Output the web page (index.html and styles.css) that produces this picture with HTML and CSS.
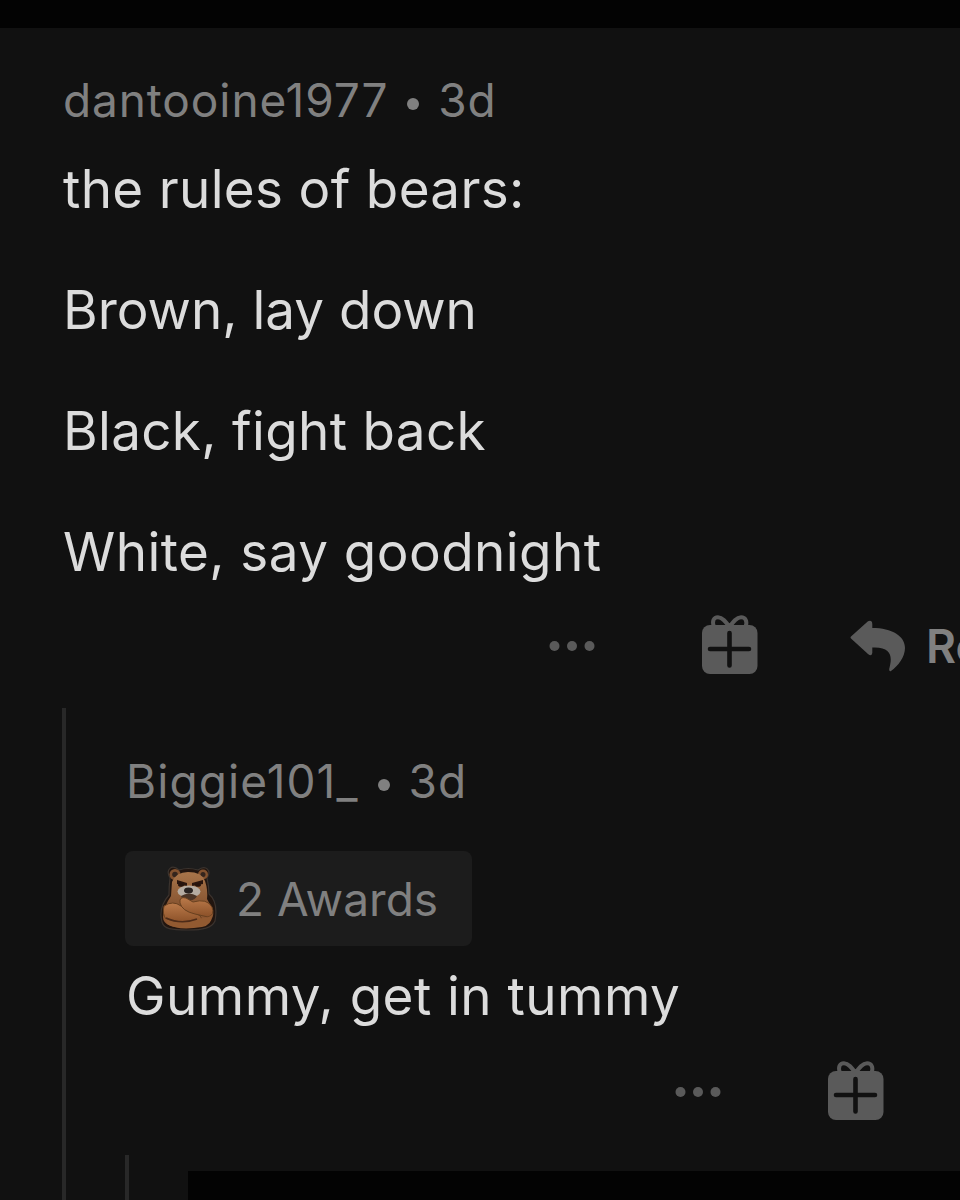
FILE: index.html
```
<!DOCTYPE html>
<html lang="en">

<head>
    <meta charset="UTF-8">
    <meta name="viewport" content="width=device-width, initial-scale=1.0">
    <title>Comments</title>
    <link rel="stylesheet" href="styles.css">
</head>

<body>
    <!-- Shared icons -->
    <svg class="icon-defs" width="0" height="0">
        <symbol id="icon-more" viewBox="0 0 46 12">
            <circle cx="5.5" cy="6" r="5" />
            <circle cx="23" cy="6" r="5" />
            <circle cx="40.5" cy="6" r="5" />
        </symbol>
        <symbol id="icon-gift" viewBox="0 0 56 60">
            <path d="M27.5 12 C24 7 20.5 2.2 16 2.2 C11.5 2.2 10 6 11.8 11.5 M27.5 12 C31 7 34.5 2.2 39 2.2 C43.5 2.2 45.5 6 43.7 11.5" fill="none" stroke="currentColor" stroke-width="4" />
            <rect x="0" y="10" width="55.5" height="49" rx="8" />
            <path d="M27.5 18 V50.5 M8 34 H47" fill="none" stroke="#111" stroke-width="4.6" stroke-linecap="round" />
        </symbol>
        <symbol id="icon-reply" viewBox="0 0 56 52">
            <path d="M1 16.5 L18 1.200 Q22 -0.500 22.300 4 V8 C42 8 55 16 55 28 C55 37 48 46 41 51 Q39 52 39.200 49 C42.500 37 42 26.500 22.300 27.500 V33 Q21.500 37 18 34 L1 18.500 Q0 17.500 1 16.500 Z" />
        </symbol>
    </svg>

    <div class="top-bar"></div>

    <div class="comment">
        <div class="author">dantooine1977 <span class="dot"></span> 3d</div>
        <div class="comment-text">
            <p class="line-rules">the rules of bears:</p>
            <p class="line-brown">Brown, lay down</p>
            <p class="line-black">Black, fight back</p>
            <p class="line-white">White, say goodnight</p>
        </div>
        <div class="actions">
            <svg class="more"><use href="#icon-more" /></svg>
            <svg class="gift"><use href="#icon-gift" /></svg>
            <svg class="reply"><use href="#icon-reply" /></svg>
            <span class="reply-label">Reply</span>
        </div>
    </div>

    <div class="replies">
        <div class="author">Biggie101_ <span class="dot"></span> 3d</div>
        <div class="awards">
            <svg class="bear" viewBox="0 0 60 68">
                <defs>
                    <linearGradient id="fur" x1="0" y1="0" x2="0" y2="1">
                        <stop offset="0" stop-color="#a8754a" />
                        <stop offset="0.55" stop-color="#8a5733" />
                        <stop offset="1" stop-color="#8f5630" />
                    </linearGradient>
                    <linearGradient id="arm" x1="0" y1="0" x2="0" y2="1">
                        <stop offset="0" stop-color="#bb7a4a" />
                        <stop offset="1" stop-color="#8a5028" />
                    </linearGradient>
                </defs>
                <path d="M12 14 C7 5 14 0 21 6 Q30 3 40 6 C48 0 54 7 49 14 Q51 23 51 30 C58 36 59 46 57 57 C54 64 45 66 30 66 C13 66 6 65 4 58 C1 47 4 39 11 31 Q11 22 12 14 Z" fill="#21150f" stroke="#3b332e" stroke-width="1.2" />
                <circle cx="17" cy="10.5" r="5.5" fill="#82522f" />
                <circle cx="17" cy="10.5" r="2.8" fill="#34251d" />
                <circle cx="45" cy="10.5" r="5" fill="#82522f" />
                <circle cx="45" cy="10.5" r="2.5" fill="#34251d" />
                <path d="M14 18 Q18 8 30 8 Q44 8 47 17 Q50 26 49 35 L55 46 Q58 62 30 64 Q5 64 5 53 Q6 42 13 32 Z" fill="url(#fur)" />
                <path d="M19 16 L29 19 V22 L19 20 Z M45 16 L34 19 V22 L45 20 Z" fill="#2a160e" />
                <ellipse cx="23" cy="21" rx="3" ry="1.8" fill="#26140d" />
                <ellipse cx="40" cy="21" rx="3" ry="1.8" fill="#26140d" />
                <ellipse cx="31" cy="27.5" rx="11.5" ry="6" fill="#b5aca2" />
                <path d="M23 32 Q31 27 39 32 Q37 37 30 36 Q24 36 23 32 Z" fill="#4b3527" />
                <ellipse cx="30.5" cy="26.500" rx="4.500" ry="3" fill="#292321" />
                <path d="M6 42 Q15 36 23 42 L41 51 Q46 55 41 59 Q21 59 8 55 Q4 50 6 42 Z" fill="url(#arm)" stroke="#68401f" stroke-width="1" />
                <path d="M22 39 Q21 32 28 34 L35 38 Q49 34 54 43 Q57 51 50 53 L37 50 Q24 47 22 39 Z" fill="url(#arm)" stroke="#68401f" stroke-width="1" />
                <path d="M8 55 Q24 61 39 54 Q49 55 54 51 Q54 61 44 63 Q20 67 9 60 Z" fill="#925a31" />
                <path d="M8 54 Q23 61 39 55" fill="none" stroke="#4d2b18" stroke-width="1.5" />
            </svg>
            <span>2 Awards</span>
        </div>
        <div class="comment-text">
            <p class="line-gummy">Gummy, get in tummy</p>
        </div>
        <div class="actions">
            <svg class="more"><use href="#icon-more" /></svg>
            <svg class="gift"><use href="#icon-gift" /></svg>
        </div>
        <div class="nested">
            <div class="hidden-reply"></div>
        </div>
    </div>
</body>

</html>
```
FILE: styles.css
```
* {
    box-sizing: border-box;
}

body {
    margin: 0;
    height: 1200px;
    display: flex;
    flex-direction: column;
    overflow: hidden;
    background: #111;
    color: #dcdcdc;
    font-family: Inter, "Liberation Sans", sans-serif;
}

.icon-defs {
    position: absolute;
}

.top-bar {
    height: 28px;
    flex: none;
    background: #030303;
}

.comment {
    height: 680px;
    flex: none;
    padding: 44px 0 0 63px;
    overflow: hidden;
}

.author {
    height: 56px;
    color: #808080;
    font-size: 46px;
    line-height: 56px;
    letter-spacing: 0.9px;
    white-space: nowrap;
}

.replies .author {
    letter-spacing: 1.1px;
}

.dot {
    display: inline-block;
    width: 12px;
    height: 12px;
    margin: 0 5px;
    border-radius: 50%;
    background: #808080;
    vertical-align: 7px;
}

.comment-text {
    margin-top: 31px;
    font-size: 53px;
    line-height: 60px;
    white-space: nowrap;
}

.comment-text p {
    margin: 0 0 61px;
}

.comment-text p:last-child {
    margin-bottom: 0;
}

.line-rules,
.line-black {
    letter-spacing: 0.32px;
}

.line-white,
.line-gummy {
    letter-spacing: 0.44px;
}

.actions {
    display: flex;
    align-items: center;
    height: 68px;
    margin-top: 30px;
    padding-left: 486px;
    color: #5a5a5a;
    fill: currentColor;
}

.more {
    width: 46px;
    height: 12px;
    flex: none;
}

.gift {
    width: 56px;
    height: 60px;
    flex: none;
    margin: 0 0 3px 107px;
}

.reply {
    width: 56px;
    height: 52px;
    flex: none;
    margin-left: 92px;
}

.reply-label {
    margin-left: 20px;
    color: #808080;
    font-size: 46px;
    font-weight: 600;
}

/* Thread line runs down the left side */
.replies {
    flex: 1;
    margin-left: 62px;
    padding: 45px 0 0 60px;
    border-left: 4px solid #282828;
}

.awards {
    display: flex;
    align-items: center;
    width: 347px;
    height: 95px;
    margin: 42px 0 0 -1px;
    padding-left: 33px;
    border-radius: 8px;
    background: #1c1c1c;
    color: #808080;
    font-size: 46px;
    white-space: nowrap;
}

.bear {
    width: 60px;
    height: 68px;
    flex: none;
    margin: 0 18px 2px 0;
}

.replies .comment-text {
    margin-top: 20px;
}

.replies .actions {
    margin-top: 32px;
    padding-left: 549px;
}

.nested {
    height: 45px;
    margin: 29px 0 0 -1px;
    padding: 16px 0 0 59px;
    border-left: 4px solid #282828;
}

.hidden-reply {
    height: 29px;
    background: #030303;
}
```
